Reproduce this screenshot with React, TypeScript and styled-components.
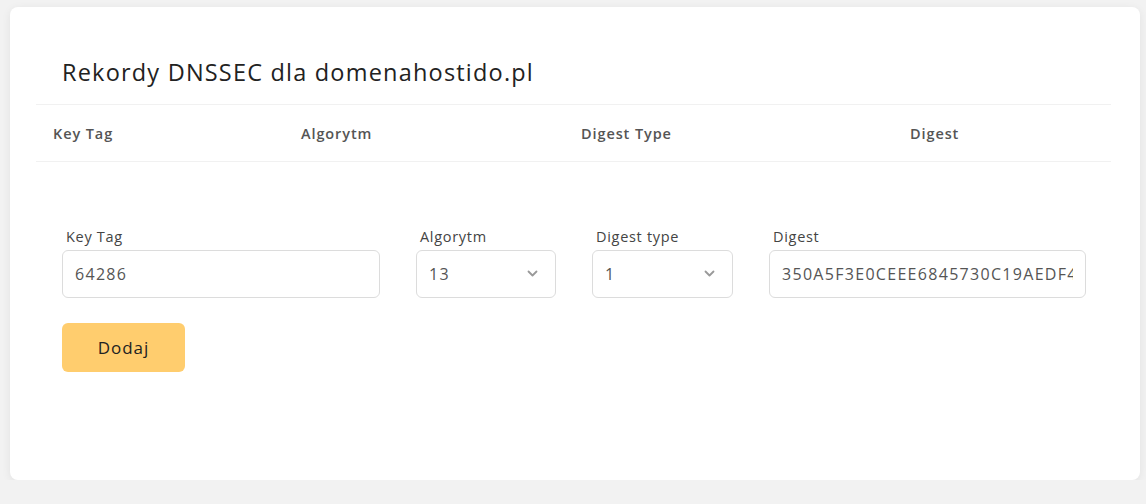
import React from 'react';
import styled, { createGlobalStyle } from 'styled-components';

const GlobalStyle = createGlobalStyle`
  html, body {
    margin: 0;
    padding: 0;
    background: #f2f2f2;
    font-family: "Open Sans", "Noto Sans", sans-serif;
  }
  * {
    box-sizing: border-box;
  }
`;

const Page = styled.div`
  padding: 7px 6px 0 10px;
`;

const Card = styled.div`
  width: 1130px;
  height: 473px;
  background: #fff;
  border-radius: 8px;
  box-shadow: 0 2px 10px rgba(0, 0, 0, 0.07);
  padding: 0 29px 0 26px;
`;

const Title = styled.h2`
  margin: 0;
  height: 97px;
  padding: 50px 0 0 26px;
  font-size: 23.5px;
  font-weight: 400;
  letter-spacing: 1.2px;
  color: #222;
  line-height: 30px;
`;

const HeaderRow = styled.div`
  display: grid;
  grid-template-columns: 248px 280px 329px 1fr;
  align-items: center;
  height: 58px;
  padding-left: 17px;
  border-top: 1px solid #f1f1f1;
  border-bottom: 1px solid #f1f1f1;
`;

const HeaderCell = styled.div`
  font-size: 14.5px;
  font-weight: 600;
  letter-spacing: 0.9px;
  color: #555;
`;

const Form = styled.form`
  padding: 65px 0 0 26px;
`;

const Fields = styled.div`
  display: flex;
  gap: 36px;
`;

const Field = styled.label<{ $width: number }>`
  display: flex;
  flex-direction: column;
  width: ${(p) => p.$width}px;
`;

const LabelText = styled.span`
  font-size: 14.5px;
  letter-spacing: 0.7px;
  color: #444;
  padding-left: 4px;
  line-height: 20px;
  margin-bottom: 3px;
`;

const Input = styled.input`
  height: 48px;
  width: 100%;
  border: 1px solid #dcdcdc;
  border-radius: 6px;
  padding: 0 12px;
  font-family: inherit;
  font-size: 16px;
  letter-spacing: 1.3px;
  color: #555;
  background: #fff;
  outline: none;
`;

const SelectBox = styled.div`
  position: relative;
  height: 48px;
  width: 100%;
  border: 1px solid #dcdcdc;
  border-radius: 6px;
  display: flex;
  align-items: center;
  padding: 0 12px;
  font-size: 16px;
  letter-spacing: 1.3px;
  color: #555;
`;

const Chevron = styled.svg`
  position: absolute;
  right: 17px;
  top: 50%;
  margin-top: -4px;
`;

const Button = styled.button`
  margin-top: 25px;
  width: 123px;
  height: 49px;
  border: none;
  border-radius: 6px;
  background: #ffcd6e;
  font-family: inherit;
  font-size: 17px;
  letter-spacing: 1px;
  color: #222;
  cursor: pointer;
`;

const Select = ({ value }: { value: string }) => (
  <SelectBox>
    {value}
    <Chevron width="11" height="7" viewBox="0 0 11 7">
      <path d="M1.5 1.5 L5.5 5.5 L9.5 1.5" fill="none" stroke="#999" strokeWidth="1.8" strokeLinecap="round" strokeLinejoin="round" />
    </Chevron>
  </SelectBox>
);

const App = () => (
  <Page>
    <GlobalStyle />
    <Card>
      <Title>Rekordy DNSSEC dla domenahostido.pl</Title>
      <HeaderRow>
        <HeaderCell>Key Tag</HeaderCell>
        <HeaderCell>Algorytm</HeaderCell>
        <HeaderCell>Digest Type</HeaderCell>
        <HeaderCell>Digest</HeaderCell>
      </HeaderRow>
      <Form onSubmit={(e) => e.preventDefault()}>
        <Fields>
          <Field $width={318}>
            <LabelText>Key Tag</LabelText>
            <Input defaultValue="64286" />
          </Field>
          <Field $width={140}>
            <LabelText>Algorytm</LabelText>
            <Select value="13" />
          </Field>
          <Field $width={141}>
            <LabelText>Digest type</LabelText>
            <Select value="1" />
          </Field>
          <Field $width={317}>
            <LabelText>Digest</LabelText>
            <Input defaultValue="350A5F3E0CEEE6845730C19AEDF4B2A1C0D9E8F7A6B5C4D3E2F1A0B9" />
          </Field>
        </Fields>
        <Button type="submit">Dodaj</Button>
      </Form>
    </Card>
  </Page>
);

export default App;
